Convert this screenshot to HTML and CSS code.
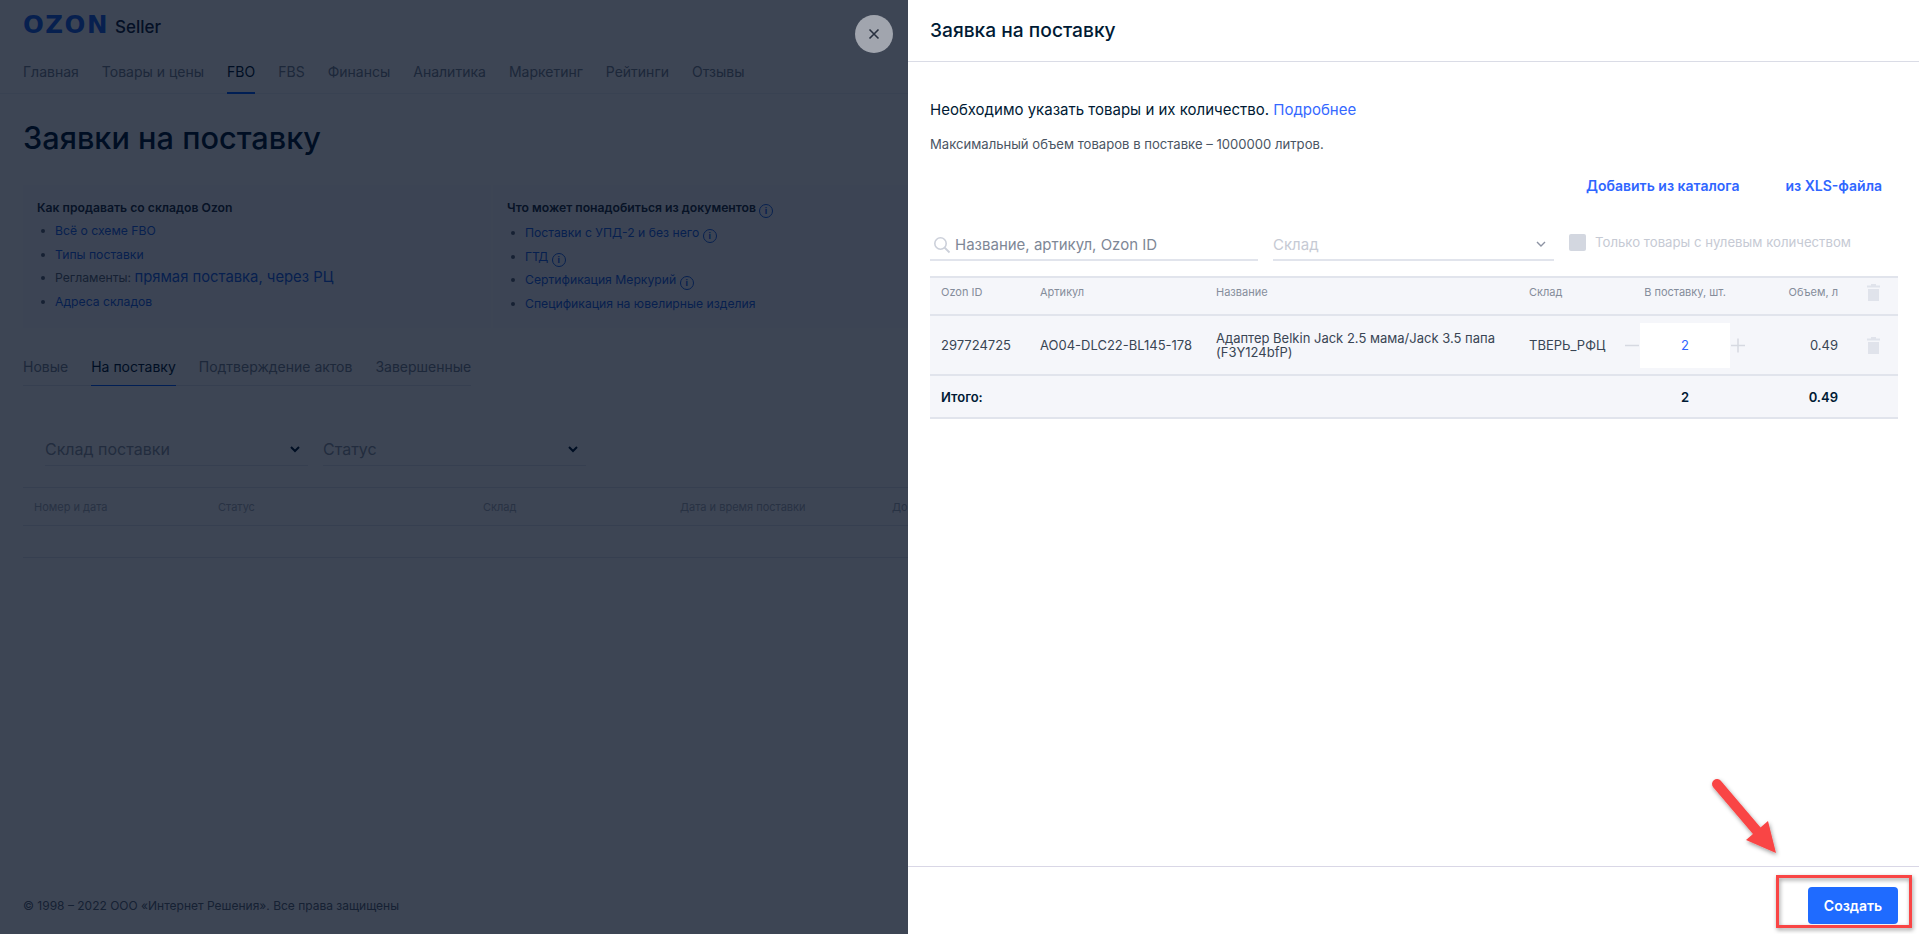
FILE: index.html
```html
<!DOCTYPE html>
<html lang="ru">
<head>
<meta charset="utf-8">
<title>Заявка на поставку</title>
<link rel="stylesheet" href="styles.css">
</head>
<body>
<div class="page">
  <header class="brand"><span class="logo">OZON</span><span class="seller">Seller</span></header>
  <nav class="nav">
    <a>Главная</a><a>Товары и цены</a><a class="on">FBO</a><a>FBS</a><a>Финансы</a><a>Аналитика</a><a>Маркетинг</a><a>Рейтинги</a><a>Отзывы</a>
  </nav>
  <h1 class="page-title">Заявки на поставку</h1>
  <section class="cards">
    <div class="card">
      <h3>Как продавать со складов Ozon</h3>
      <ul>
        <li><a>Всё о схеме FBO</a></li>
        <li><a>Типы поставки</a></li>
        <li>Регламенты: <a class="big">прямая поставка, через РЦ</a></li>
        <li><a>Адреса складов</a></li>
      </ul>
    </div>
    <div class="card">
      <h3>Что может понадобиться из документов <i class="info">i</i></h3>
      <ul>
        <li><a>Поставки с УПД-2 и без него</a> <i class="info">i</i></li>
        <li><a>ГТД</a> <i class="info">i</i></li>
        <li><a>Сертификация Меркурий</a> <i class="info">i</i></li>
        <li><a>Спецификация на ювелирные изделия</a></li>
      </ul>
    </div>
  </section>
  <div class="tabs"><a>Новые</a><a class="on">На поставку</a><a>Подтверждение актов</a><a>Завершенные</a></div>
  <div class="filters">
    <div class="select">Склад поставки<svg width="10" height="7" viewBox="0 0 10 7"><path d="M1 1l4 4 4-4" fill="none" stroke="#001a34" stroke-width="2"/></svg></div>
    <div class="select">Статус<svg width="10" height="7" viewBox="0 0 10 7"><path d="M1 1l4 4 4-4" fill="none" stroke="#001a34" stroke-width="2"/></svg></div>
  </div>
  <div class="bg-table">
    <div class="bg-head"><span class="c1">Номер и дата</span><span class="c2">Статус</span><span class="c3">Склад</span><span class="c4">Дата и время поставки</span><span>Документы</span></div>
    <div class="bg-row"></div>
  </div>
  <footer class="copy">© 1998 – 2022 ООО «Интернет Решения». Все права защищены</footer>
</div>

<div class="overlay"></div>
<button class="close" aria-label="Закрыть"><svg width="12" height="12" viewBox="0 0 12 12"><path d="M1.5 1.5l9 9m0-9l-9 9" stroke="#28303f" stroke-width="1.6" fill="none"/></svg></button>

<aside class="panel">
  <div class="panel-head">Заявка на поставку</div>
  <div class="panel-body">
    <p class="lead">Необходимо указать товары и их количество. <a>Подробнее</a></p>
    <p class="note">Максимальный объем товаров в поставке – 1000000 литров.</p>
    <div class="actions"><a>Добавить из каталога</a><a>из XLS-файла</a></div>
    <div class="tools">
      <div class="search">
        <svg width="18" height="18" viewBox="0 0 18 18"><circle cx="7.5" cy="7.5" r="5.7" fill="none" stroke="#ccd0da" stroke-width="1.6"/><path d="M11.5 11.5l5 5" stroke="#ccd0da" stroke-width="1.8"/></svg>
        <span>Название, артикул, Ozon ID</span>
      </div>
      <div class="wh">Склад<svg width="10" height="7" viewBox="0 0 10 7"><path d="M1 1l4 4 4-4" fill="none" stroke="#8d93a3" stroke-width="1.4"/></svg></div>
      <label class="zero"><i class="box"></i>Только товары с нулевым количеством</label>
    </div>
    <table class="goods">
      <colgroup><col class="w1"><col class="w2"><col class="w3"><col class="w4"><col class="w5"><col class="w6"><col class="w7"></colgroup>
      <thead>
        <tr><th>Ozon ID</th><th>Артикул</th><th>Название</th><th>Склад</th><th class="mid">В поставку, шт.</th><th class="end">Объем, л</th><th class="mid"><svg class="trash" width="13" height="17" viewBox="0 0 13 17"><path d="M4 0h5v1.5h4V3.500H0V1.500h4zM1 5h11v12H1z" fill="#e0e3eb"/></svg></th></tr>
      </thead>
      <tbody>
        <tr class="item">
          <td>297724725</td><td>AO04-DLC22-BL145-178</td><td class="name">Адаптер Belkin Jack 2.5 мама/Jack 3.5 папа (F3Y124bfP)</td><td>ТВЕРЬ_РФЦ</td>
          <td class="mid"><div class="qty"><svg class="sign" width="15" height="15" viewBox="0 0 15 15"><path d="M0 7.5h14" stroke="#d6d9e1" stroke-width="1.500"/></svg><span class="val">2</span><svg class="sign" width="15" height="15" viewBox="0 0 15 15"><path d="M1 7.5h14M8 .5v14" stroke="#d6d9e1" stroke-width="1.500"/></svg></div></td>
          <td class="end">0.49</td>
          <td class="mid"><svg class="trash" width="13" height="17" viewBox="0 0 13 17"><path d="M4 0h5v1.500h4V3.500H0V1.500h4zM1 5h11v12H1z" fill="#e0e3eb"/></svg></td>
        </tr>
        <tr class="total"><td colspan="4">Итого:</td><td class="mid">2</td><td class="end">0.49</td><td></td></tr>
      </tbody>
    </table>
  </div>
  <div class="panel-foot"><button class="create">Создать</button></div>
</aside>

<svg class="callout" width="1919" height="934" viewBox="0 0 1919 934">
  <defs><filter id="sh" x="-20%" y="-20%" width="140%" height="140%"><feDropShadow dx="1" dy="2" stdDeviation="2" flood-color="#000" flood-opacity=".4"/></filter></defs>
  <g filter="url(#sh)">
    <path d="M1717 784L1757 831" stroke="#f94545" stroke-width="10" stroke-linecap="round" fill="none"/>
    <path d="M1776 853L1768 821L1746 840z" fill="#f94545"/>
    <rect x="1777.500" y="876.500" width="133" height="50" fill="none" stroke="#f94545" stroke-width="3"/>
  </g>
</svg>
</body>
</html>
```
FILE: styles.css
```css
* { box-sizing: border-box; }
html, body { margin: 0; height: 934px; overflow: hidden; }
body { position: relative; width: 1919px; font-family: Inter, "Noto Sans", sans-serif; color: #001a34; background: #fff; }
a { color: #005bff; text-decoration: none; }
p, h1, h3, ul { margin: 0; padding: 0; }

.page { height: 934px; padding: 0 23px; display: flex; flex-direction: column; }
.brand { height: 50px; padding-top: 13px; display: flex; align-items: baseline; gap: 6px; }
.logo { font: 800 24.500px/24px "DejaVu Sans", sans-serif; letter-spacing: 1.500px; color: #1f66e8; }
.seller { font-size: 17px; line-height: 24px; font-weight: 500; color: #12253a; }
.nav { height: 44px; margin: 0 -23px; padding: 0 23px; display: flex; gap: 23px; border-bottom: 1px solid #eef0f5; font-size: 14px; line-height: 44px; }
.nav a { color: #7b8591; height: 44px; }
.nav a.on { color: #001a34; border-bottom: 2px solid #005bff; }
.page-title { margin-top: 24px; font-size: 30.700px; line-height: 40px; font-weight: 500; }
.cards { margin-top: 27px; display: flex; gap: 2px; }
.card { width: 468px; height: 143px; padding: 15px 14px; background: #fbfbfd; font-size: 12.200px; line-height: 16px; color: #5c6875; }
.card a { color: #1f66e8; }
.card h3 { font-size: 12.200px; line-height: 16px; font-weight: 600; color: #22303f; margin-bottom: 3px; }
.card ul { list-style: none; }
.card li { height: 23.500px; line-height: 23.500px; padding-left: 18px; position: relative; white-space: nowrap; }
.card li::before { content: ""; position: absolute; left: 4px; top: 10px; width: 4px; height: 4px; border-radius: 50%; background: #5c6875; }
.card .big { font-size: 14.800px; }
.info { display: inline-block; width: 14px; height: 14px; border: 1.500px solid #1f66e8; border-radius: 50%; color: #1f66e8; font: 700 9px/11px Inter, sans-serif; text-align: center; vertical-align: -2px; }
.tabs { margin-top: 25px; display: flex; gap: 23px; align-self: flex-start; border-bottom: 1px solid #e3e6ee; font-size: 14px; height: 33px; line-height: 27px; }
.tabs a { color: #7b8591; height: 33px; }
.tabs a.on { color: #001a34; border-bottom: 1px solid #005bff; }
.filters { margin: 47px 0 0 22px; display: flex; gap: 15px; }
.select { width: 263px; height: 33px; display: flex; justify-content: space-between; align-items: center; padding-right: 8px; border-bottom: 1px solid #e3e6ee; font-size: 16px; color: #8f97a3; }
.bg-table { margin-top: 21px; margin-right: -100px; }
.bg-head { height: 39px; display: flex; align-items: center; padding-left: 11px; border: solid #e3e6ee; border-width: 1px 0; font-size: 11px; color: #a8aeb8; white-space: nowrap; }
.bg-head .c1 { width: 184px; }
.bg-head .c2 { width: 265px; }
.bg-head .c3 { width: 197px; }
.bg-head .c4 { width: 212px; }
.bg-row { height: 32px; border-bottom: 1px solid #e3e6ee; }
.copy { margin-top: auto; margin-bottom: 21px; font-size: 12px; line-height: 14px; color: #5c6875; }

.overlay { position: absolute; inset: 0; background: rgba(0, 10, 30, .76); }
.close { position: absolute; left: 855px; top: 15px; width: 38px; height: 38px; border: 0; padding: 0; border-radius: 50%; background: #a1a5ae; display: flex; align-items: center; justify-content: center; }

.panel { position: absolute; top: 0; right: 0; width: 1011px; height: 934px; background: #fff; display: flex; flex-direction: column; }
.panel-head { height: 62px; padding: 0 22px; border-bottom: 1px solid #dadce6; font-size: 19.200px; line-height: 61px; font-weight: 500; color: #001a34; }
.panel-body { flex: 1; padding: 38px 21px 0 22px; }
.lead { font-size: 15px; line-height: 20px; }
.lead a { color: #3568ff; }
.note { margin-top: 15px; font-size: 13.100px; line-height: 18px; color: #4a5563; }
.actions { margin-top: 23px; display: flex; justify-content: flex-end; gap: 46px; padding-right: 16px; font-size: 14px; line-height: 20px; font-weight: 600; }
.actions a { color: #2f66ff; }
.tools { margin-top: 31px; display: flex; height: 49px; }
.search { width: 328px; height: 34px; padding-top: 3px; border-bottom: 2px solid #e1e4ec; display: flex; align-items: center; gap: 4px; padding-left: 3px; font-size: 15px; color: #7e8796; }
.wh { width: 281px; height: 34px; padding-top: 2px; margin-left: 15px; border-bottom: 2px solid #e1e4ec; display: flex; align-items: center; justify-content: space-between; padding-right: 8px; font-size: 15px; color: #c6cad4; }
.zero { margin-left: 15px; display: flex; gap: 9px; height: 18px; font-size: 13.200px; line-height: 17px; color: #c6cad4; margin-top: 7px; }
.box { width: 17px; height: 17px; border-radius: 2px; background: #d3d7e0; }

.goods { width: 968px; table-layout: fixed; border-collapse: collapse; background: #f5f6fa; font-size: 13px; color: #394554; }
.goods tr { border-bottom: 2px solid #e1e4ec; }
.goods thead tr { border-top: 2px solid #e1e4ec; height: 38px; }
.goods tr.item { height: 60px; }
.goods tr.total { height: 43px; font-weight: 600; color: #001a34; font-size: 13px; }
.goods th { padding: 0 0 8px 11px; font-size: 11px; font-weight: 400; color: #858d9b; text-align: left; }
.goods td { padding: 0 0 0 11px; }
.goods .mid { padding-left: 0; text-align: center; }
.goods .end { padding-left: 0; padding-right: 11px; text-align: right; }
.goods thead .mid svg { vertical-align: top; }
.goods .w1 { width: 99px; }
.goods .w2 { width: 176px; }
.goods .w3 { width: 313px; }
.goods .w4 { width: 92px; }
.goods .w5 { width: 150px; }
.goods .w6 { width: 89px; }
.goods .w7 { width: 49px; }
.name { line-height: 14px; }
.qty { display: flex; align-items: center; justify-content: center; }
.val { width: 90px; height: 45px; background: #fff; color: #2f66ff; line-height: 45px; }
.sign { flex: none; }
.trash { display: inline-block; vertical-align: middle; }

.panel-foot { height: 68px; padding: 20px 21px 0 0; border-top: 1px solid #d9d7e6; display: flex; justify-content: flex-end; }
.create { width: 90px; height: 37px; border: 0; border-radius: 4px; background: #1f6bff; color: #fff; font: 600 14px Inter, sans-serif; }
.callout { position: absolute; left: 0; top: 0; pointer-events: none; }
```
